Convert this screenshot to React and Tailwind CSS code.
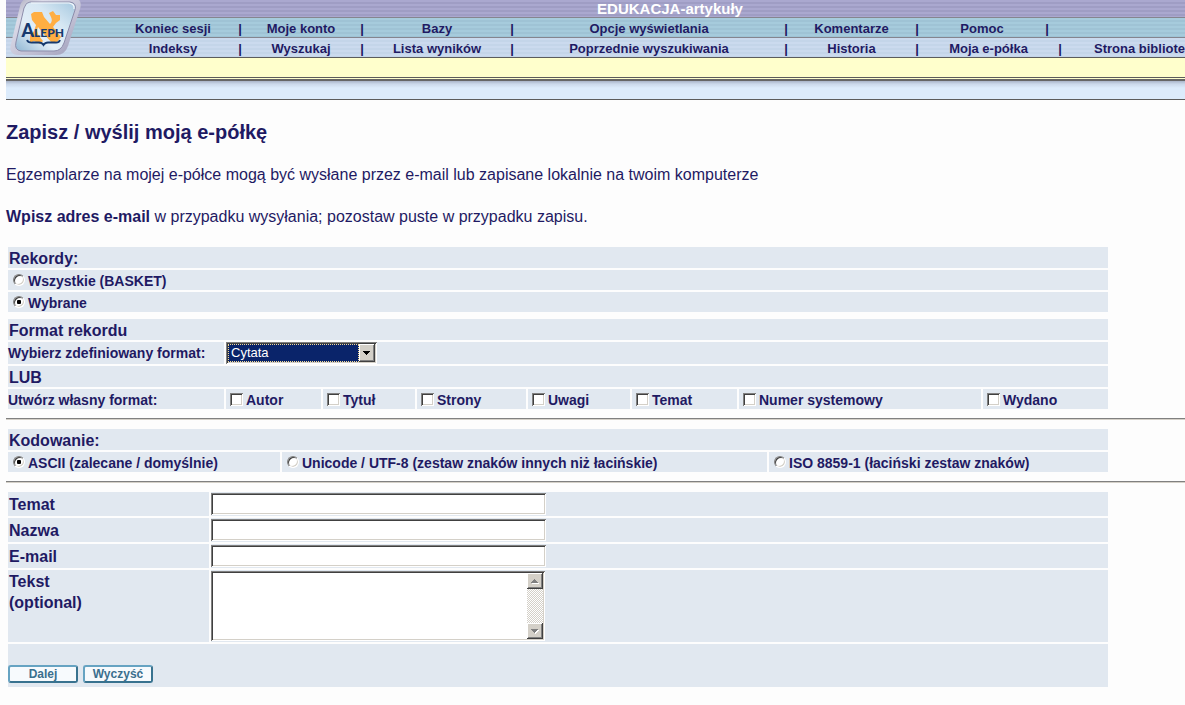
const SUNKEN =
  "shadow-[inset_1px_1px_0_#808080,inset_-1px_-1px_0_#ffffff,inset_2px_2px_0_#404040,inset_-2px_-2px_0_#d4d0c8]";
const RAISED =
  "bg-[#d4d0c8] shadow-[inset_-1px_-1px_0_#404040,inset_1px_1px_0_#ffffff,inset_-2px_-2px_0_#808080]";

const MENU_TOP = [
  ["Koniec sesji", "w-[126px]"],
  ["Moje konto", "w-[114px]"],
  ["Bazy", "w-[142px]"],
  ["Opcje wyświetlania", "w-[266px]"],
  ["Komentarze", "w-[123px]"],
  ["Pomoc", "w-[122px]"],
];

const MENU_BOTTOM = [
  ["Indeksy", "w-[126px]"],
  ["Wyszukaj", "w-[114px]"],
  ["Lista wyników", "w-[142px]"],
  ["Poprzednie wyszukiwania", "w-[266px]"],
  ["Historia", "w-[123px]"],
  ["Moja e-półka", "w-[135px]"],
];

const FIELDS = ["Autor", "Tytuł", "Strony", "Uwagi", "Temat", "Numer systemowy", "Wydano"];

function Logo() {
  return (
    <svg className="absolute top-0 left-0 h-[58px] w-[80px]" viewBox="6 0 80 58" role="img" aria-label="Aleph">
      <defs>
        <linearGradient id="rim" x1="0" y1="0" x2="1" y2="1">
          <stop offset="0" stopColor="#a3a2b4" />
          <stop offset="0.25" stopColor="#dcdce9" />
          <stop offset="0.6" stopColor="#c3c2d6" />
          <stop offset="1" stopColor="#9c9bb8" />
        </linearGradient>
        <linearGradient id="face" x1="0" y1="1" x2="1" y2="0">
          <stop offset="0" stopColor="#8fb6d3" />
          <stop offset="0.35" stopColor="#e3eef7" />
          <stop offset="0.65" stopColor="#d6e7f3" />
          <stop offset="1" stopColor="#a5c8df" />
        </linearGradient>
      </defs>
      <path d="M28 -2 H74 Q83 -1 80 9 L68 46 Q65 55 56 55 H18 Q8 54 11 44 L20 6 Q22 -1 28 -2Z" fill="url(#rim)" />
      <path d="M30 2 H70 Q77 3 75 10 L64 43 Q61 51 54 51 H21 Q14 50 16 42 L24 8 Q26 2 30 2Z" fill="url(#face)" stroke="#8d8dab" strokeWidth="1" />
      <path d="M31 3 H69 Q75 4 74 9" fill="none" stroke="#f4f8fc" strokeWidth="1.200" />
      <path
        d="M34 12 L42 12 L44 17 L50 24 Q53 21 51 17 L49 13 L53 11 L56 15 L60 15 L60 20 L56 23 L53 27 L58 33 L61 37 L57 42 L52 43 L43 33 L38 27 Q36 31 39 36 L43 41 L40 44 L34 41 L30 43 L30 36 L34 31 L36 25 L32 20 L31 14 Z"
        fill="#ffae42"
      />
      <text x="21.500" y="37" fill="#173a6e" fontFamily="Lato, sans-serif" fontWeight="900" fontSize="18">A</text>
      <text x="34" y="37" fill="#173a6e" fontFamily="Lato, sans-serif" fontWeight="900" fontSize="12">LEPH</text>
      <path d="M27 40 Q28 43 33 42.500 L39 42.500 Q42 42.500 43.500 45 Q45 42.500 48 42.500 L55 42.500 Q59 43 60 40" fill="none" stroke="#173a6e" strokeWidth="1.800" />
    </svg>
  );
}

function Menu({ items, className, children }) {
  return (
    <nav className={`flex h-5 border-b pt-[2px] pl-26 text-[13px] leading-[17px] font-bold whitespace-nowrap ${className}`}>
      {items.map(([text, width]) => (
        <div key={text} className="flex shrink-0 text-center">
          <a href="#" className={width}>{text}</a>
          <span className="w-2">|</span>
        </div>
      ))}
      {children}
    </nav>
  );
}

function Table({ cols, children, className = "" }) {
  return (
    <table className={`w-[93.6%] table-fixed border-separate border-spacing-[2px] text-left ${className}`}>
      <colgroup>
        {cols.map((c, i) => (
          <col key={i} className={c} />
        ))}
      </colgroup>
      <tbody>{children}</tbody>
    </table>
  );
}

function Title({ span, children }) {
  return (
    <tr>
      <th colSpan={span} className="h-[21px] bg-[#e1e8f0] p-0 pt-[2px] pl-px text-base leading-[19px] font-bold">
        {children}
      </th>
    </tr>
  );
}

function Radio({ name, checked, children }) {
  return (
    <label className="flex h-5 items-center gap-[3px] pl-[5px] text-sm leading-[18px] font-bold">
      <input
        type="radio"
        name={name}
        defaultChecked={checked}
        className="size-3 shrink-0 appearance-none rounded-full border border-t-[#808080] border-r-white border-b-white border-l-[#808080] bg-white shadow-[inset_1px_1px_0_#404040,inset_-1px_-1px_0_#d4d0c8] checked:bg-[radial-gradient(circle,#000_2px,#fff_2.5px)]"
      />
      <span className="pt-[2px]">{children}</span>
    </label>
  );
}

function FieldRow({ id, label, type }) {
  return (
    <tr>
      <th className="h-6 bg-[#e1e8f0] p-0 pt-[2px] pl-px text-base leading-[22px] font-bold">
        <label htmlFor={id}>{label}</label>
      </th>
      <td className="bg-[#e1e8f0] p-0">
        <input id={id} type={type} className={`block h-[22px] w-[335px] bg-white px-1 text-sm outline-none ${SUNKEN}`} />
      </td>
    </tr>
  );
}

function ScrollArrow({ d, label }) {
  return (
    <button type="button" aria-label={label} className={`grid size-4 place-items-center ${RAISED}`}>
      <svg viewBox="0 0 16 16" className="size-4">
        <path d={d} fill="#fff" transform="translate(1 1)" />
        <path d={d} fill="#808080" />
      </svg>
    </button>
  );
}

const CELL = "h-5 bg-[#e1e8f0] p-0";
const BUTTON =
  "h-[18px] w-[70px] rounded-[3px] border-2 border-t-[#66a3c2] border-r-[#38728f] border-b-[#38728f] border-l-[#66a3c2] bg-[#f7fafd] text-xs leading-[14px] font-bold text-[#3b6f8e]";

export default function App() {
  return (
    <div className="min-h-screen bg-[#fdfdfd] pb-4 pl-1.5 font-['Liberation_Sans',Arial,sans-serif] text-[#1f1a63]">
      <header className="relative overflow-hidden">
        <div className="h-[18px] border-b border-[#85858f] bg-[repeating-linear-gradient(#aaa8cf_0px_2px,#9f9dc4_2px_4px)] pl-26">
          <div className="w-[1120px] text-center text-[15px] leading-[17px] font-bold text-white">EDUKACJA-artykuły</div>
        </div>
        <Menu items={MENU_TOP} className="border-[#85858f] bg-[repeating-linear-gradient(#a6cbdc_0px_2px,#9fc3d5_2px_4px)]" />
        <Menu items={MENU_BOTTOM} className="border-[#5c5c5c] bg-[repeating-linear-gradient(#cbdaee_0px_2px,#c4d5e9_2px_4px)]">
          <a href="#" className="pl-[30px]">Strona biblioteki</a>
        </Menu>
        <Logo />
        <div className="h-5 border-b border-[#5c5c5c] bg-[#ffffcc]" />
        <div className="h-px bg-[#ffffcc]" />
        <div className="h-[21px] border-t-2 border-b border-t-[#666666] border-b-[#5c5c5c] bg-[linear-gradient(#a9b4c8,#cbd8ea_3px,#dcebfb_7px,#dcebfb)]" />
      </header>

      <main>
        <h1 className="mt-[18px] text-xl leading-7 font-bold">Zapisz / wyślij moją e-półkę</h1>
        <p className="mt-[17px] text-base leading-6">
          Egzemplarze na mojej e-półce mogą być wysłane przez e-mail lub zapisane lokalnie na twoim komputerze
        </p>
        <p className="mt-[18px] text-base leading-6">
          <b>Wpisz adres e-mail</b> w przypadku wysyłania; pozostaw puste w przypadku zapisu.
        </p>

        <form onSubmit={(e) => e.preventDefault()}>
          <Table cols={["w-auto"]} className="mt-4">
            <Title>Rekordy:</Title>
            <tr>
              <td className={CELL}><Radio name="records">Wszystkie (BASKET)</Radio></td>
            </tr>
            <tr>
              <td className={CELL}><Radio name="records" checked>Wybrane</Radio></td>
            </tr>
          </Table>

          <Table
            cols={["w-[216px]", "w-[95px]", "w-[92px]", "w-[109px]", "w-[102px]", "w-[105px]", "w-[242px]", "w-auto"]}
            className="mt-[3px]"
          >
            <Title span={8}>Format rekordu</Title>
            <tr>
              <th className="h-[22px] bg-[#e1e8f0] p-0 text-sm leading-[22px] font-bold">
                <label htmlFor="format">Wybierz zdefiniowany format:</label>
              </th>
              <td colSpan={7} className="bg-[#e1e8f0] p-0">
                <div className={`relative h-[22px] w-[151px] bg-white p-[2px] ${SUNKEN}`}>
                  <select
                    id="format"
                    className="block h-[18px] w-full appearance-none border border-dotted border-[#f5db95] bg-[#0a246a] pl-0.5 text-[13px] leading-4 text-white outline-none"
                  >
                    <option>Cytata</option>
                  </select>
                  <span className="pointer-events-none absolute top-[2px] right-[2px] h-[18px] border-l border-dotted border-[#f5db95]">
                    <span className={`block h-[18px] w-4 ${RAISED}`}>
                      <svg viewBox="0 0 16 18" className="h-[18px] w-4">
                        <path d="M4 7h7v1h-1v1h-1v1h-1v1h-1v-1h-1v-1h-1v-1h-1z" fill="#000" />
                      </svg>
                    </span>
                  </span>
                </div>
              </td>
            </tr>
            <Title span={8}>LUB</Title>
            <tr>
              <th className={`h-5 bg-[#e1e8f0] p-0 pt-[2px] text-sm leading-[18px] font-bold`}>Utwórz własny format:</th>
              {FIELDS.map((field) => (
                <td key={field} className={CELL}>
                  <label className="flex h-5 items-center gap-[3px] pl-1 text-sm leading-[18px] font-bold whitespace-nowrap">
                    <input type="checkbox" className={`size-[13px] shrink-0 appearance-none bg-white checked:bg-[#1f1a63] ${SUNKEN}`} />
                    <span className="pt-[2px]">{field}</span>
                  </label>
                </td>
              ))}
            </tr>
          </Table>

          <hr className="my-[7px] h-[2px] border-t border-b border-t-[#808080] border-b-[#d4d0c8]" />

          <Table cols={["w-[272px]", "w-[485px]", "w-auto"]}>
            <Title span={3}>Kodowanie:</Title>
            <tr>
              <td className={CELL}><Radio name="encoding" checked>ASCII (zalecane / domyślnie)</Radio></td>
              <td className={CELL}><Radio name="encoding">Unicode / UTF-8 (zestaw znaków innych niż łacińskie)</Radio></td>
              <td className={CELL}><Radio name="encoding">ISO 8859-1 (łaciński zestaw znaków)</Radio></td>
            </tr>
          </Table>

          <hr className="my-[7px] h-[2px] border-t border-b border-t-[#808080] border-b-[#d4d0c8]" />

          <Table cols={["w-[201px]", "w-auto"]}>
            <FieldRow id="subject" label="Temat" type="text" />
            <FieldRow id="name" label="Nazwa" type="text" />
            <FieldRow id="email" label="E-mail" type="email" />
            <tr>
              <th className="h-[72px] bg-[#e1e8f0] p-0 pt-px pl-px align-top text-base leading-[21px] font-bold">
                <label htmlFor="text">Tekst<br />(optional)</label>
              </th>
              <td className="bg-[#e1e8f0] p-0">
                <div className={`flex h-[70px] w-[334px] bg-white p-[2px] ${SUNKEN}`}>
                  <textarea id="text" className="min-w-0 flex-1 resize-none bg-white px-1 text-sm outline-none" />
                  <div className="flex w-4 flex-col justify-between bg-[repeating-conic-gradient(#d4d0c8_0_25%,#ffffff_0_50%)] bg-[length:2px_2px]">
                    <ScrollArrow label="W górę" d="M4 10h7v-1h-1v-1h-1v-1h-1v-1h-1v1h-1v1h-1v1h-1z" />
                    <ScrollArrow label="W dół" d="M4 6h7v1h-1v1h-1v1h-1v1h-1v-1h-1v-1h-1v-1h-1z" />
                  </div>
                </div>
              </td>
            </tr>
            <tr>
              <td colSpan={2} className="h-[43px] bg-[#e1e8f0] p-0">
                <div className="flex gap-[5px] pt-[21px] pb-1">
                  <button type="submit" className={BUTTON}>Dalej</button>
                  <button type="reset" className={BUTTON}>Wyczyść</button>
                </div>
              </td>
            </tr>
          </Table>
        </form>
      </main>
    </div>
  );
}
